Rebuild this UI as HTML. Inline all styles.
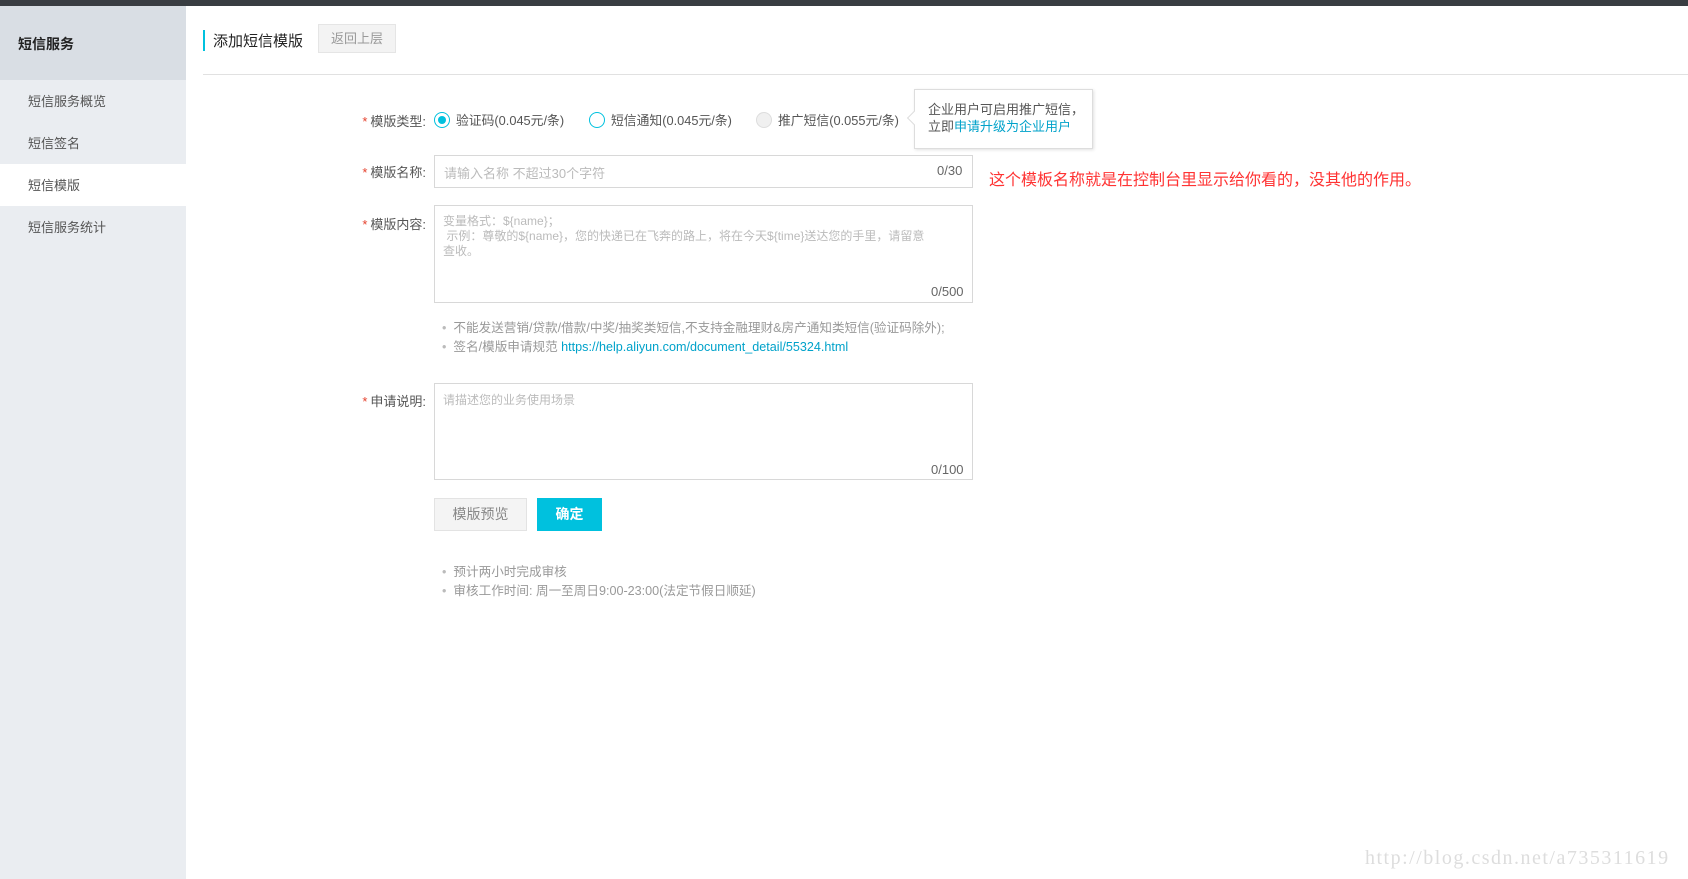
<!DOCTYPE html>
<html><head><meta charset="utf-8"><style>
*{margin:0;padding:0;box-sizing:border-box}
body{width:1688px;height:879px;position:relative;overflow:hidden;background:#fff;font-family:"Liberation Sans","Noto Sans CJK SC",sans-serif;font-size:13px;color:#333}
.a{position:absolute;white-space:nowrap}
.top{left:0;top:0;width:1688px;height:6px;background:#393d42}
.side{left:0;top:6px;width:186px;height:873px;background:#eaedf1}
.sh{left:0;top:6px;width:186px;height:74px;background:#d9dee4}
.si{left:28px;font-size:13px;color:#555}
.lab{width:120px;text-align:right;left:306px;color:#555}
.lab b{color:#e5412d;font-weight:normal;margin-right:3px}
.box{border:1px solid #d8d8d8;background:#fff}
.ph{color:#bbb}
.cnt{color:#666;font-size:13px}
.radio{width:16px;height:16px;border-radius:50%;border:1px solid #00c1de;background:#fff}
.note{color:#999;font-size:12.6px}
.dot{color:#bbb}
</style></head><body>
<div class="a top"></div>
<div class="a side"></div>
<div class="a sh"></div>
<div class="a" style="left:18px;top:34px;font-size:14px;font-weight:bold;color:#222">短信服务</div>
<div class="a si" style="top:91px">短信服务概览</div>
<div class="a si" style="top:133px">短信签名</div>
<div class="a" style="left:0;top:164px;width:186px;height:42px;background:#fff"></div>
<div class="a si" style="top:175px">短信模版</div>
<div class="a si" style="top:217px">短信服务统计</div>

<div class="a" style="left:203px;top:30px;width:2px;height:21px;background:#00c1de"></div>
<div class="a" style="left:213px;top:30px;font-size:15px;color:#222">添加短信模版</div>
<div class="a" style="left:318px;top:24px;width:78px;height:29px;background:#f3f3f3;border:1px solid #e5e5e5;color:#999;text-align:center;line-height:27px">返回上层</div>
<div class="a" style="left:203px;top:74px;width:1485px;height:1px;background:#e1e1e1"></div>

<div class="a lab" style="top:111px"><b>*</b>模版类型:</div>
<div class="a radio" style="left:434px;top:112px"></div>
<div class="a" style="left:438px;top:116px;width:8px;height:8px;border-radius:50%;background:#00c1de"></div>
<div class="a" style="left:456px;top:110px;color:#555;font-size:12.8px">验证码(0.045元/条)</div>
<div class="a radio" style="left:589px;top:112px"></div>
<div class="a" style="left:611px;top:110px;color:#555;font-size:12.8px">短信通知(0.045元/条)</div>
<div class="a radio" style="left:756px;top:112px;border-color:#ddd;background:#f0f0f0"></div>
<div class="a" style="left:778px;top:110px;color:#555;font-size:12.8px">推广短信(0.055元/条)</div>
<div class="a" style="left:914px;top:89px;width:179px;height:60px;border:1px solid #ddd;background:#fff;box-shadow:1px 1px 3px rgba(0,0,0,.12)"></div>
<div class="a" style="left:909px;top:113px;width:10px;height:10px;background:#fff;border-left:1px solid #ddd;border-bottom:1px solid #ddd;transform:rotate(45deg)"></div>
<div class="a" style="left:928px;top:101px;font-size:13px;line-height:17px;color:#555">企业用户可启用推广短信，<br>立即<span style="color:#00a2ca">申请升级为企业用户</span></div>

<div class="a lab" style="top:162px"><b>*</b>模版名称:</div>
<div class="a box" style="left:434px;top:155px;width:539px;height:33px"></div>
<div class="a ph" style="left:444px;top:163px">请输入名称 不超过30个字符</div>
<div class="a cnt" style="left:937px;top:163px">0/30</div>
<div class="a" style="left:989px;top:166px;font-size:16px;color:#f33">这个模板名称就是在控制台里显示给你看的，没其他的作用。</div>

<div class="a lab" style="top:214px"><b>*</b>模版内容:</div>
<div class="a box" style="left:434px;top:205px;width:539px;height:98px"></div>
<div class="a ph" style="left:443px;top:214px;font-size:12px;line-height:15px">变量格式：${name}；<br>&nbsp;示例：尊敬的${name}，您的快递已在飞奔的路上，将在今天${time}送达您的手里，请留意<br>查收。</div>
<div class="a cnt" style="left:931px;top:284px">0/500</div>

<div class="a note" style="left:442px;top:317px"><span class="dot">•</span>&nbsp; 不能发送营销/贷款/借款/中奖/抽奖类短信,不支持金融理财&amp;房产通知类短信(验证码除外);</div>
<div class="a note" style="left:442px;top:336px"><span class="dot">•</span>&nbsp; 签名/模版申请规范 <span style="color:#00a2ca">https://help.aliyun.com/document_detail/55324.html</span></div>

<div class="a lab" style="top:391px"><b>*</b>申请说明:</div>
<div class="a box" style="left:434px;top:383px;width:539px;height:97px"></div>
<div class="a ph" style="left:443px;top:391px;font-size:12px">请描述您的业务使用场景</div>
<div class="a cnt" style="left:931px;top:462px">0/100</div>

<div class="a" style="left:434px;top:498px;width:93px;height:33px;background:#f4f4f4;border:1px solid #e3e3e3;color:#888;text-align:center;line-height:31px;font-size:14px">模版预览</div>
<div class="a" style="left:537px;top:498px;width:65px;height:33px;background:#00c1de;color:#fff;text-align:center;line-height:33px;font-size:14px;font-weight:bold">确定</div>

<div class="a note" style="left:442px;top:561px"><span class="dot">•</span>&nbsp; 预计两小时完成审核</div>
<div class="a note" style="left:442px;top:580px"><span class="dot">•</span>&nbsp; 审核工作时间: 周一至周日9:00-23:00(法定节假日顺延)</div>

<div class="a" style="left:1365px;top:847px;font-family:'Liberation Serif',serif;font-size:20px;letter-spacing:1.5px;color:#ddd">http://blog.csdn.net/a735311619</div>
</body></html>
